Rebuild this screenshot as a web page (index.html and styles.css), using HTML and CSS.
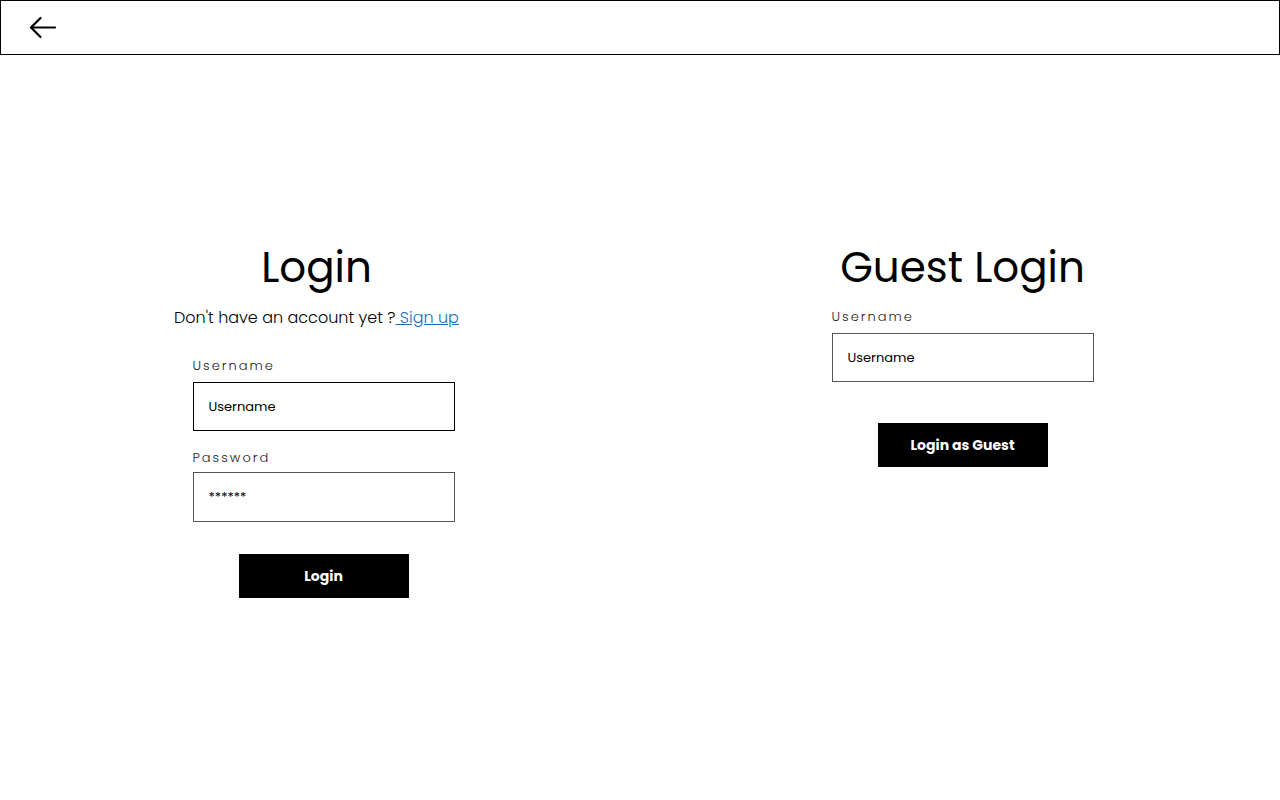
FILE: index.html
```html
<!DOCTYPE html>
<html lang="en">
<head>
<meta charset="utf-8">
<title>Login</title>
<link rel="stylesheet" href="styles.css">
</head>
<body>
<header class="topbar">
  <a class="back" href="#" aria-label="Back">
    <svg width="28" height="24" viewBox="0 0 28 24" fill="none" stroke="#000" stroke-width="2.2" stroke-linecap="round" stroke-linejoin="round">
      <path d="M26 11.5H3"/>
      <path d="M11.5 2L2 11.5l9.5 9.5"/>
    </svg>
  </a>
</header>
<main class="main">
  <section class="col col-left">
    <h1 class="title title-left">Login</h1>
    <p class="sub title-left">Don't have an account yet ?<a href="#" class="link"> Sign up</a></p>
    <form class="form form-login">
      <label class="label">Username</label>
      <input class="field field-dark" type="text" placeholder="Username">
      <label class="label label-gap">Password</label>
      <input class="field field-grey field-tall" type="text" value="******">
      <button class="btn btn-login" type="button">Login</button>
    </form>
  </section>
  <section class="col col-right">
    <h1 class="title">Guest Login</h1>
    <form class="form form-guest">
      <label class="label">Username</label>
      <input class="field field-grey" type="text" placeholder="Username">
      <button class="btn btn-guest" type="button">Login as Guest</button>
    </form>
  </section>
</main>
</body>
</html>
```
FILE: styles.css
```css
* { box-sizing: border-box; }
html, body { margin: 0; padding: 0; background: #fff; }
body {
  font-family: "Poppins", "Open Sans", "DejaVu Sans", sans-serif;
  color: #000;
  width: 1280px;
  height: 800px;
}
.topbar {
  height: 55px;
  border: 1px solid #000;
  display: flex;
  align-items: center;
  padding-left: 28px;
}
.back { display: flex; }
.main {
  display: grid;
  grid-template-columns: 647px 631px;
  padding-top: 184px;
}
.col {
  display: flex;
  flex-direction: column;
  align-items: center;
}
.title {
  margin: 0;
  font-size: 42px;
  line-height: 58px;
  font-weight: 400;
}
.title-left { margin-right: 14px; }
.sub {
  margin: 9px 14px 0 0;
  font-size: 16px;
  line-height: 24px;
  font-weight: 300;
}
.link { color: #1a6db5; text-decoration: underline; }
.form {
  display: flex;
  flex-direction: column;
  width: 262px;
}
.form-login { margin-top: 26px; }
.form-guest { margin-top: 10px; }
.label {
  font-size: 13px;
  line-height: 20px;
  letter-spacing: 2px;
  font-weight: 300;
  color: #222;
  margin-bottom: 6px;
}
.label-gap { margin-top: 17px; margin-bottom: 4px; }
.field {
  width: 262px;
  height: 49px;
  padding: 0 15px;
  font-family: inherit;
  font-size: 13px;
  font-weight: 400;
  color: #000;
  background: #fff;
  border: 1px solid #555;
  outline: none;
}
.field::placeholder { color: #000; }
.field-dark { border-color: #000; }
.field-tall { height: 50px; }
.btn {
  align-self: center;
  width: 170px;
  height: 44px;
  background: #000;
  color: #fff;
  border: none;
  font-family: inherit;
  font-size: 14px;
  font-weight: 700;
  cursor: pointer;
}
.btn-login { margin-top: 32px; }
.btn-guest { margin-top: 41px; }
```
